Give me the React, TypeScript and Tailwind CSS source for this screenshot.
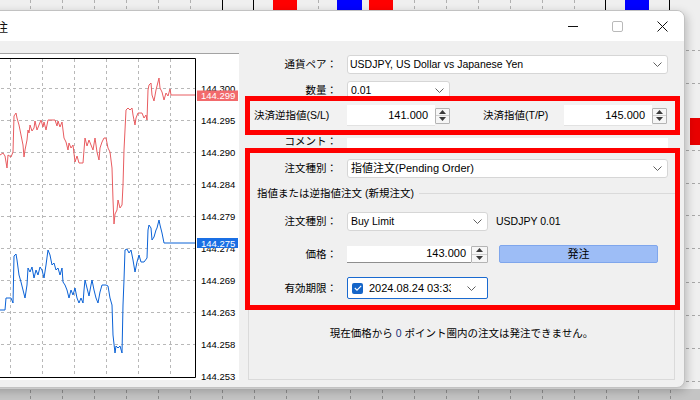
import React from 'react';

// chart traces, in screen coordinates
const RED: [number, number][] = [
  [-23, 155], [0, 155], [3, 153], [5, 156], [7, 168], [8, 155], [11, 157], [13, 152], [14, 116], [16, 113], [17, 118],
  [19, 125], [21, 135], [23, 145], [24, 157], [25, 150], [27, 140], [28, 130], [29, 133], [30, 125], [32, 131],
  [34, 128], [35, 121], [37, 130], [39, 125], [41, 120], [43, 127], [44, 122], [46, 130], [48, 120], [52, 120],
  [55, 120], [57, 126], [58, 121], [60, 127], [62, 122], [64, 138], [66, 142], [68, 150], [69, 143], [71, 148],
  [73, 145], [75, 162], [77, 156], [79, 163], [83, 163], [84, 150], [85, 138], [87, 146], [89, 140], [91, 145],
  [93, 150], [95, 138], [97, 152], [99, 160], [100, 148], [102, 142], [104, 138], [106, 138], [108, 148],
  [110, 152], [111, 160], [112, 168], [113, 200], [114, 224], [115, 214], [117, 210], [118, 200], [120, 208],
  [122, 205], [123, 185], [124, 150], [126, 110], [128, 108], [130, 110], [132, 108], [133, 115], [135, 125],
  [136, 118], [138, 113], [142, 113], [144, 118], [146, 115], [147, 120], [148, 90], [149, 85], [151, 83],
  [152, 95], [154, 101], [156, 90], [157, 86], [158, 82], [159, 78], [160, 88], [162, 92], [164, 100], [166, 93],
  [168, 96], [170, 89], [171, 95], [195, 95],
];

const BLUE: [number, number][] = [
  [-23, 310], [5, 310], [6, 298], [11, 298], [13, 303], [14, 256], [16, 254], [17, 260], [19, 275], [21, 282],
  [23, 290], [25, 298], [27, 285], [28, 268], [30, 272], [32, 267], [34, 278], [36, 270], [38, 275], [40, 267],
  [42, 270], [44, 278], [46, 265], [48, 250], [50, 255], [52, 265], [54, 263], [56, 270], [58, 268], [60, 275],
  [62, 268], [63, 282], [65, 285], [67, 290], [69, 298], [71, 290], [73, 295], [75, 288], [77, 298], [79, 303],
  [81, 298], [83, 303], [84, 290], [85, 280], [87, 288], [89, 296], [91, 285], [92, 280], [94, 290], [96, 298],
  [98, 303], [100, 292], [102, 285], [106, 285], [108, 286], [110, 298], [112, 305], [113, 335], [115, 353],
  [116, 346], [118, 348], [120, 346], [122, 353], [123, 305], [124, 280], [125, 250], [127, 249], [129, 253],
  [131, 250], [133, 260], [135, 272], [137, 262], [139, 255], [141, 262], [144, 262], [147, 258], [148, 230],
  [149, 225], [151, 228], [152, 240], [154, 237], [156, 230], [157, 228], [159, 220], [160, 225], [162, 233],
  [164, 243], [195, 243],
];

const PRICES: [string, number][] = [
  ['144.300', 88], ['144.295', 120], ['144.290', 152], ['144.284', 184], ['144.279', 216],
  ['144.274', 248], ['144.269', 280], ['144.263', 312], ['144.258', 344], ['144.253', 376],
];

const GRID_X = [10, 42, 74, 106, 138, 170];
const BG_TICKS = [30, 62, 94, 126, 158, 190, 286, 318, 414, 446, 478, 510, 542, 574, 638];

const pts = (p: [number, number][]) => p.map(([x, y]) => `${x},${y}`).join(' ');

function Chevron() {
  return (
    <svg width="9" height="5" viewBox="0 0 9 5" className="shrink-0">
      <polyline points="0.5,0.5 4.5,4.5 8.5,0.5" fill="none" stroke="#606060" strokeWidth="1" />
    </svg>
  );
}

function Spinner({ className }: { className: string }) {
  return (
    <div className={`flex flex-col border border-[#b4b4b4] bg-[#f6f6f6] rounded-[1px] ${className}`}>
      <div className="flex-1 flex items-center justify-center border-b border-[#cfcfcf]">
        <svg width="7" height="4" viewBox="0 0 7 4">
          <polygon points="0,4 3.5,0 7,4" fill="#3a3a3a" />
        </svg>
      </div>
      <div className="flex-1 flex items-center justify-center">
        <svg width="7" height="4" viewBox="0 0 7 4">
          <polygon points="0,0 7,0 3.5,4" fill="#3a3a3a" />
        </svg>
      </div>
    </div>
  );
}

function Chart() {
  return (
    <svg width="262" height="326" viewBox="-23 54 262 326" className="block">
      {GRID_X.map((x) => (
        <line key={x} x1={x + 0.5} y1={59} x2={x + 0.5} y2={377} stroke="#b8b8b8" strokeDasharray="3 3" />
      ))}
      {PRICES.slice(0, 9).map(([, y]) => (
        <line key={y} x1={-23} y1={y + 0.5} x2={199} y2={y + 0.5} stroke="#b8b8b8" strokeDasharray="3 3" />
      ))}
      <polyline points={pts(RED)} fill="none" stroke="#e85c60" strokeWidth="1" />
      <polyline points={pts(BLUE)} fill="none" stroke="#0b62d6" strokeWidth="1" />
      <polyline points="-23,58.5 195.5,58.5 195.5,377.5 -23,377.5" fill="none" stroke="#000" strokeWidth="1" />
      {PRICES.map(([t, y]) => (
        <text key={t} x={201} y={y + 3.5} fontSize="9.5" fill="#000" fontFamily="Liberation Sans, sans-serif">
          {t}
        </text>
      ))}
      <rect x={197} y={90.5} width={41} height={10.5} fill="#f26a6c" />
      <text x={201} y={99} fontSize="9.5" fill="#fff" fontFamily="Liberation Sans, sans-serif">144.299</text>
      <rect x={197} y={238} width={41} height={10} fill="#1a6fe4" />
      <text x={201} y={246.5} fontSize="9.5" fill="#fff" fontFamily="Liberation Sans, sans-serif">144.275</text>
    </svg>
  );
}

function Backdrop() {
  return (
    <svg className="absolute inset-0" width="700" height="400">
      <rect width="700" height="400" fill="#efefef" />
      {BG_TICKS.map((x) => (
        <line key={x} x1={x + 0.5} y1={0} x2={x + 0.5} y2={10} stroke="#b0b0b0" strokeDasharray="3 3" />
      ))}
      {[222, 253, 605, 669].map((x) => (
        <line key={x} x1={x + 0.5} y1={0} x2={x + 0.5} y2={10} stroke="#000" />
      ))}
      <rect x={273} y={0} width={24} height={10} fill="#ff0000" />
      <rect x={369} y={0} width={24} height={10} fill="#ff0000" />
      <rect x={337} y={0} width={25} height={10} fill="#0000ff" />
      <rect x={625} y={0} width={24} height={10} fill="#0000ff" />
      {[50, 83, 150, 183, 215, 248, 282, 315, 348, 381].map((y) => (
        <line key={y} x1={686} y1={y + 0.5} x2={700} y2={y + 0.5} stroke="#a8a8a8" strokeDasharray="3 3" />
      ))}
      <rect x={690} y={118} width={10} height={27} fill="#e80000" />
      <rect x={0} y={389} width={700} height={11} fill="#c4c4c4" />
      {[30, 62, 94, 126, 158, 190, 222, 254, 286, 318, 350, 382, 414, 446, 478, 510, 542, 574, 606, 638, 670].map((x) => (
        <line key={x} x1={x + 0.5} y1={390} x2={x + 0.5} y2={400} stroke="#8c8c8c" strokeDasharray="3 3" />
      ))}
    </svg>
  );
}

export default function App() {
  return (
    <div className="relative w-[700px] h-[400px] overflow-hidden font-['Liberation_Sans','Noto_Sans_CJK_JP',sans-serif] text-[10.5px] leading-[13px] text-[#000]">
      <Backdrop />
      <div className="absolute left-[-24px] top-[10px] w-[709px] h-[378px] flex flex-col bg-[#f0f0f0] border border-[#c2c2c2] rounded-r-[8px] overflow-hidden shadow-[2px_3px_10px_rgba(0,0,0,0.22)]">
        {/* title bar */}
        <div className="h-[30px] flex items-center bg-white shrink-0">
          <span className="pl-[7px] text-[12px] text-[#111] font-['Noto_Sans_CJK_JP',sans-serif]">発注</span>
          <div className="ml-auto flex h-full">
            <div className="w-[45px] h-full flex items-center justify-center">
              <svg width="10" height="10" viewBox="0 0 10 10">
                <line x1="0" y1="5.5" x2="10" y2="5.5" stroke="#111" strokeWidth="1" />
              </svg>
            </div>
            <div className="w-[45px] h-full flex items-center justify-center">
              <svg width="11" height="11" viewBox="0 0 11 11">
                <rect x="0.5" y="0.5" width="10" height="10" rx="1.5" fill="none" stroke="#b9b9b9" strokeWidth="1" />
              </svg>
            </div>
            <div className="w-[44px] h-full flex items-center justify-center">
              <svg width="11" height="11" viewBox="0 0 11 11">
                <path d="M0.5 0.5 L10.5 10.5 M10.5 0.5 L0.5 10.5" stroke="#111" strokeWidth="1" />
              </svg>
            </div>
          </div>
        </div>

        {/* body */}
        <div className="flex-1 flex">
          <div className="mt-[12px] w-[262px] h-[327px] shrink-0 bg-white border-t border-[#a3a3a3]">
            <Chart />
          </div>

          <div className="ml-[6px] w-[435px] flex flex-col pt-[14px]">
            <div className="h-[19px] flex items-center">
              <span className="w-[92px] text-right">通貨ペア：</span>
              <div className="ml-[10px] w-[321px] h-[19px] flex items-center justify-between bg-white border border-[#d6d6d6] rounded-[3px] pl-[2px] pr-[5px]">
                <span>USDJPY, US Dollar vs Japanese Yen</span>
                <Chevron />
              </div>
            </div>

            <div className="mt-[7px] h-[19px] flex items-center">
              <span className="w-[92px] text-right">数量：</span>
              <div className="ml-[10px] w-[103px] h-[19px] flex items-center justify-between bg-white border border-[#d6d6d6] rounded-[3px] pl-[3px] pr-[5px]">
                <span>0.01</span>
                <Chevron />
              </div>
            </div>

            {/* stop loss / take profit */}
            <div className="relative mt-[-4px] h-[39px] flex items-center border-[5px] border-[#ff0000] bg-[#f2f2f2]">
              <span className="w-[87px] pl-[4px]">決済逆指値(S/L)</span>
              <div className="ml-[10px] w-[88px] h-[21px] flex items-center justify-end bg-white border-b border-[#e2e2e2] pr-[7px] text-[11px]">141.000</div>
              <Spinner className="w-[15px] h-[16px]" />
              <span className="ml-[33px] w-[81px]">決済指値(T/P)</span>
              <div className="w-[88px] h-[21px] flex items-center justify-end bg-white border-b border-[#e2e2e2] pr-[7px] text-[11px]">145.000</div>
              <Spinner className="w-[15px] h-[16px]" />
            </div>

            <div className="h-[13px] flex items-center">
              <span className="w-[92px] text-right leading-[11px]">コメント：</span>
              <div className="ml-[10px] w-[321px] h-[10px] mt-[2px] bg-white" />
            </div>

            {/* order section */}
            <div className="h-[162px] flex flex-col border-[5px] border-[#ff0000]">
              <div className="mt-[6px] h-[19px] flex items-center">
                <span className="w-[87px] text-right">注文種別：</span>
                <div className="ml-[10px] w-[321px] h-[19px] flex items-center justify-between bg-white border border-[#d6d6d6] rounded-[3px] pl-[3px] pr-[5px]">
                  <span className="text-[11px]">指値注文(Pending Order)</span>
                  <Chevron />
                </div>
              </div>

              <div className="mt-[7px] h-[16px] flex items-center">
                <span className="pl-[7px]">指値または逆指値注文 (新規注文)</span>
                <div className="flex-1 ml-[5px] border-t border-[#dadada]" />
              </div>

              <div className="mt-[11px] h-[19px] flex items-center">
                <span className="w-[87px] text-right">注文種別：</span>
                <div className="ml-[10px] w-[141px] h-[19px] flex items-center justify-between bg-white border border-[#d6d6d6] rounded-[3px] pl-[3px] pr-[5px]">
                  <span>Buy Limit</span>
                  <Chevron />
                </div>
                <span className="ml-[8px]">USDJPY 0.01</span>
              </div>

              <div className="mt-[14px] h-[18px] flex items-center">
                <span className="w-[87px] text-right">価格：</span>
                <div className="ml-[10px] w-[124px] h-[17px] flex items-center justify-end bg-white border-b border-[#8e8e8e] pr-[5px] text-[11px]">143.000</div>
                <Spinner className="w-[17px] h-[17px]" />
                <div className="ml-[11px] w-[159px] h-[18px] flex items-center justify-center bg-[#9dbdf6] border border-[#7fa6ec] rounded-[2px] text-[11px]">
                  発注
                </div>
              </div>

              <div className="mt-[14px] h-[22px] flex items-center">
                <span className="w-[87px] text-right">有効期限：</span>
                <div className="ml-[10px] w-[141px] h-[22px] flex items-center bg-white border border-[#1a6ad0] rounded-[2px] pl-[4px] pr-[11px]">
                  <div className="w-[11px] h-[11px] shrink-0 rounded-[2px] bg-[#1565c8] flex items-center justify-center">
                    <svg width="8" height="6" viewBox="0 0 8 6">
                      <polyline points="0.8,3 3,5.2 7.2,0.8" fill="none" stroke="#fff" strokeWidth="1.1" />
                    </svg>
                  </div>
                  <span className="ml-[6px] w-[82px] overflow-hidden whitespace-nowrap text-[11px]">2024.08.24 03:33</span>
                  <div className="ml-auto">
                    <Chevron />
                  </div>
                </div>
              </div>
            </div>

            <div className="ml-[3px] w-[427px] h-[70px] border-x border-b border-[#dadada] pt-[17px] text-center">
              現在価格から <span className="text-[#22307a]">0</span> ポイント圏内の注文は発注できません。
            </div>
          </div>
        </div>
      </div>
    </div>
  );
}
